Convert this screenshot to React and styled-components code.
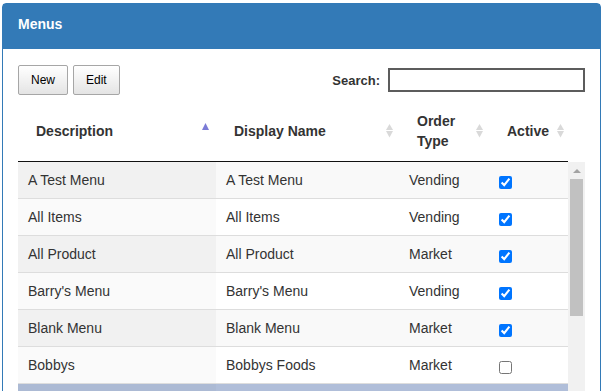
import React from "react";
import styled, { createGlobalStyle } from "styled-components";

const GlobalStyle = createGlobalStyle`
  html, body {
    margin: 0;
    padding: 0;
    overflow: hidden;
    background: #fff;
  }
  body {
    font-family: "Liberation Sans", Arial, sans-serif;
    color: #333;
  }
`;

const Page = styled.div`
  padding: 3px 0 0 2px;
`;

const Panel = styled.div`
  width: 599px;
  min-height: 440px;
  box-sizing: border-box;
  border: 1px solid #337ab7;
  border-radius: 4px 4px 0 0;
`;

const Heading = styled.div`
  background: #337ab7;
  color: #fff;
  font-weight: bold;
  font-size: 14px;
  line-height: 20px;
  padding: 10px 15px 15px;
`;

const Body = styled.div`
  padding: 16px 15px 0;
`;

const Toolbar = styled.div`
  display: flex;
  justify-content: space-between;
  align-items: center;
  height: 30px;
`;

const ButtonGroup = styled.div`
  display: flex;
  gap: 5px;
`;

const Button = styled.button`
  height: 30px;
  padding: 0 12px;
  font-family: "Liberation Sans", Arial, sans-serif;
  font-size: 12px;
  color: #000;
  background: linear-gradient(#ffffff, #e4e4e4);
  border: 1px solid #a6a6a6;
  border-radius: 2px;
`;

const SearchLabel = styled.label`
  display: flex;
  align-items: center;
  font-size: 13px;
  font-weight: bold;
  color: #333;
`;

const SearchInput = styled.input`
  margin-left: 8px;
  width: 197px;
  height: 24px;
  box-sizing: border-box;
  border: 2px solid #5c5c5c;
  padding: 0 4px;
  outline: none;
`;

const cols = "198px 183px 90px 79px";

const HeadRow = styled.div`
  display: grid;
  grid-template-columns: ${cols};
  width: 550px;
  margin-top: 6px;
  border-bottom: 1px solid #111;
`;

const HeadCell = styled.div`
  display: flex;
  align-items: center;
  justify-content: space-between;
  padding: 10px ${(p) => p.$pr || 5}px 10px 18px;
  min-height: 40px;
  font-size: 14px;
  font-weight: bold;
  line-height: 20px;
  color: #333;
`;

const Scroller = styled.div`
  display: flex;
  align-items: flex-start;
`;

const Rows = styled.div`
  width: 550px;
`;

const Row = styled.div`
  display: grid;
  grid-template-columns: ${cols};
  height: 37px;
  box-sizing: border-box;
  border-bottom: 1px solid #ddd;
`;

const rowBg = (p) => {
  if (p.$selected) return p.$sorted ? "#acbad4" : "#b0bed9";
  if (p.$odd) return p.$sorted ? "#f1f1f1" : "#f9f9f9";
  return p.$sorted ? "#fafafa" : "#ffffff";
};

const Cell = styled.div`
  display: flex;
  align-items: center;
  padding: 0 10px;
  font-size: 14px;
  color: #333;
  background: ${rowBg};
`;

const Check = styled.input`
  margin: 5px 0 0 0;
  width: 13px;
  height: 13px;
`;

const ScrollTrack = styled.div`
  width: 17px;
  height: 260px;
  background: #f1f1f1;
  display: flex;
  flex-direction: column;
  align-items: center;
`;

const ScrollArrow = styled.div`
  height: 17px;
  display: flex;
  align-items: center;
  justify-content: center;
`;

const ScrollThumb = styled.div`
  width: 13px;
  height: 137px;
  background: #c1c1c1;
`;

const SortIcon = ({ dir }) => (
  <svg width="9" height="16" viewBox="0 0 9 16">
    {dir === "asc" ? (
      <polygon points="4.5,0 8,7 1,7" fill="#7b7bd6" />
    ) : (
      <>
        <polygon points="4.5,1 8,7 1,7" fill="#d9d9d9" />
        <polygon points="1,8 8,8 4.5,14.5" fill="#d9d9d9" />
      </>
    )}
  </svg>
);

const menus = [
  ["A Test Menu", "A Test Menu", "Vending", true],
  ["All Items", "All Items", "Vending", true],
  ["All Product", "All Product", "Market", true],
  ["Barry's Menu", "Barry's Menu", "Vending", true],
  ["Blank Menu", "Blank Menu", "Market", true],
  ["Bobbys", "Bobbys Foods", "Market", false],
];

export default function App() {
  return (
    <Page>
      <GlobalStyle />
      <Panel>
        <Heading>Menus</Heading>
        <Body>
          <Toolbar>
            <ButtonGroup>
              <Button>New</Button>
              <Button>Edit</Button>
            </ButtonGroup>
            <SearchLabel>
              Search:
              <SearchInput type="text" />
            </SearchLabel>
          </Toolbar>
          <HeadRow>
            <HeadCell $pr={6}>
              <span>Description</span>
              <SortIcon dir="asc" />
            </HeadCell>
            <HeadCell>
              <span>Display Name</span>
              <SortIcon />
            </HeadCell>
            <HeadCell>
              <span>
                Order
                <br />
                Type
              </span>
              <SortIcon />
            </HeadCell>
            <HeadCell $pr={3}>
              <span>Active</span>
              <SortIcon />
            </HeadCell>
          </HeadRow>
          <Scroller>
            <Rows>
              {menus.map(([desc, name, type, active], i) => {
                const odd = i % 2 === 0;
                return (
                  <Row key={desc}>
                    <Cell $odd={odd} $sorted>{desc}</Cell>
                    <Cell $odd={odd}>{name}</Cell>
                    <Cell $odd={odd}>{type}</Cell>
                    <Cell $odd={odd}>
                      <Check type="checkbox" checked={active} readOnly />
                    </Cell>
                  </Row>
                );
              })}
              <Row>
                <Cell $selected $sorted />
                <Cell $selected />
                <Cell $selected />
                <Cell $selected />
              </Row>
            </Rows>
            <ScrollTrack>
              <ScrollArrow>
                <svg width="8" height="4" viewBox="0 0 8 4">
                  <polygon points="4,0 8,4 0,4" fill="#a3a3a3" />
                </svg>
              </ScrollArrow>
              <ScrollThumb />
            </ScrollTrack>
          </Scroller>
        </Body>
      </Panel>
    </Page>
  );
}
